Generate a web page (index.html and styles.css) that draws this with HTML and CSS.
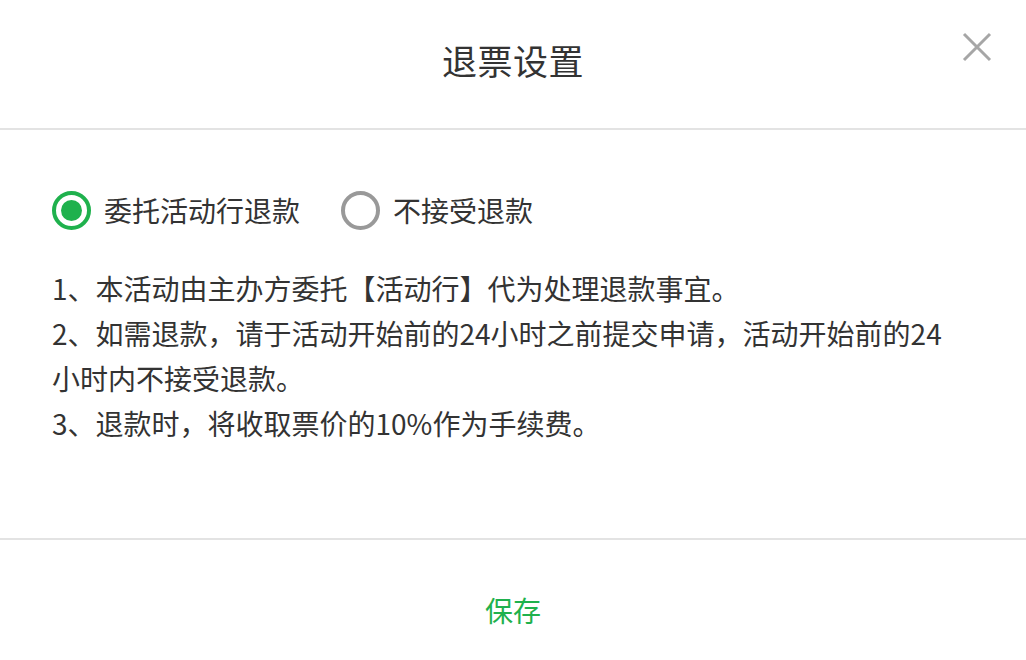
FILE: index.html
```html
<!DOCTYPE html>
<html lang="zh-CN">
<head>
<meta charset="utf-8">
<title>退票设置</title>
<link rel="stylesheet" href="styles.css">
</head>
<body>
<div class="dialog">
  <header class="header">
    <h1 class="title">退票设置</h1>
    <button class="close" aria-label="关闭">
      <svg width="30" height="30" viewBox="0 0 30 30"><path d="M2 2 L28 28 M28 2 L2 28" stroke="#a6a6a6" stroke-width="3" fill="none"/></svg>
    </button>
  </header>
  <main class="body">
    <div class="radios">
      <label class="radio checked"><span class="ring"></span><span class="label">委托活动行退款</span></label>
      <label class="radio"><span class="ring"></span><span class="label">不接受退款</span></label>
    </div>
    <div class="rules">
      <p>1、本活动由主办方委托【活动行】代为处理退款事宜。</p>
      <p>2、如需退款，请于活动开始前的24小时之前提交申请，活动开始前的24小时内不接受退款。</p>
      <p>3、退款时，将收取票价的10%作为手续费。</p>
    </div>
  </main>
  <footer class="footer">
    <button class="save">保存</button>
  </footer>
</div>
</body>
</html>
```
FILE: styles.css
```css
* { box-sizing: border-box; }
html, body { margin: 0; padding: 0; background: #fff; }
body {
  font-family: "Noto Sans CJK SC", "Noto Sans", sans-serif;
  color: #333;
}
.dialog { width: 1026px; height: 660px; display: flex; flex-direction: column; }
.header {
  position: relative;
  height: 130px;
  border-bottom: 2px solid #e3e3e3;
  display: flex;
  align-items: center;
  justify-content: center;
  padding-bottom: 10px;
}
.title { margin: 0; font-size: 35px; font-weight: 400; color: #333; letter-spacing: 0.5px; }
.close {
  position: absolute;
  top: 32px;
  right: 34px;
  width: 30px; height: 30px;
  padding: 0; border: 0; background: none;
}
.close svg { display: block; }
.body {
  height: 410px;
  border-bottom: 2px solid #e3e3e3;
  padding: 60px 52px 0;
}
.radios { display: flex; align-items: center; gap: 41px; height: 40px; }
.radio { display: flex; align-items: center; gap: 13px; font-size: 28px; line-height: 40px; }
.ring {
  width: 39px; height: 39px;
  border-radius: 50%;
  border: 4px solid #999;
  display: flex; align-items: center; justify-content: center;
}
.radio.checked .ring { border-color: #1fb14d; }
.radio.checked .ring::after {
  content: "";
  width: 21px; height: 21px;
  border-radius: 50%;
  background: #1fb14d;
}
.rules { margin-top: 36px; max-width: 905px; font-size: 28px; line-height: 45px; color: #333; }
.rules p { margin: 0; }
.footer {
  flex: 1;
  display: flex;
  justify-content: center;
  padding-top: 48px;
}
.save {
  height: 44px;
  padding: 0;
  border: 0;
  background: none;
  font-family: inherit;
  font-size: 28px;
  line-height: 44px;
  color: #1fb14d;
}
```
